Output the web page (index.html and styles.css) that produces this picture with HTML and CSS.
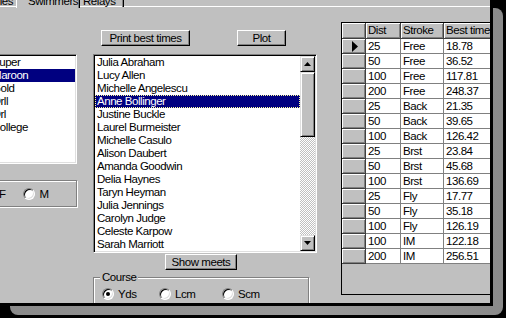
FILE: index.html
```html
<!DOCTYPE html>
<html>
<head>
<meta charset="utf-8">
<link rel="stylesheet" href="styles.css">
</head>
<body>
<div class="monitor">
  <div class="screen">
    <div class="tabs">
      <div class="tab tab-first">Schedules</div>
      <div class="tab tab-active">Swimmers</div>
      <div class="tab tab-relays">Relays</div>
    </div>
    <div class="content">
      <div class="col-left">
        <div class="listbox lb-teams">
          <div class="item">Super</div>
          <div class="item sel">Maroon</div>
          <div class="item">Gold</div>
          <div class="item">Orll</div>
          <div class="item">Orl</div>
          <div class="item">College</div>
        </div>
        <div class="group gender">
          <div class="opt opt-f"><span class="radio"></span><span>F</span></div>
          <div class="opt"><span class="radio"></span><span>M</span></div>
        </div>
      </div>

      <div class="col-mid">
        <div class="btnrow">
          <div class="btn btn-print">Print best times</div>
          <div class="btn btn-plot">Plot</div>
        </div>
        <div class="listbox lb-swim">
          <div class="items">
            <div class="item">Julia Abraham</div>
            <div class="item">Lucy Allen</div>
            <div class="item">Michelle Angelescu</div>
            <div class="item sel focus">Anne Bollinger</div>
            <div class="item">Justine Buckle</div>
            <div class="item">Laurel Burmeister</div>
            <div class="item">Michelle Casulo</div>
            <div class="item">Alison Daubert</div>
            <div class="item">Amanda Goodwin</div>
            <div class="item">Delia Haynes</div>
            <div class="item">Taryn Heyman</div>
            <div class="item">Julia Jennings</div>
            <div class="item">Carolyn Judge</div>
            <div class="item">Celeste Karpow</div>
            <div class="item">Sarah Marriott</div>
          </div>
          <div class="vscroll">
            <div class="sbtn"><svg width="7" height="4" viewBox="0 0 7 4"><path d="M3.5 0 L7 4 L0 4 Z" fill="#000"/></svg></div>
            <div class="thumb"></div>
            <div class="track"></div>
            <div class="sbtn"><svg width="7" height="4" viewBox="0 0 7 4"><path d="M0 0 L7 0 L3.5 4 Z" fill="#000"/></svg></div>
          </div>
        </div>
        <div class="btn btn-meets">Show meets</div>
        <fieldset class="course">
          <legend>Course</legend>
          <div class="opts">
            <div class="opt opt-yds"><span class="radio checked"></span><span>Yds</span></div>
            <div class="opt opt-lcm"><span class="radio"></span><span>Lcm</span></div>
            <div class="opt"><span class="radio"></span><span>Scm</span></div>
          </div>
        </fieldset>
      </div>

      <div class="col-right">
        <div class="grid">
          <div class="row head">
            <div class="c fix"></div><div class="c fix">Dist</div><div class="c fix">Stroke</div><div class="c fix">Best time</div>
          </div>
          <div class="row"><div class="c fix ind"><svg width="6" height="11" viewBox="0 0 6 11"><path d="M0 0 L6 5.5 L0 11 Z" fill="#000"/></svg></div><div class="c">25</div><div class="c">Free</div><div class="c">18.78</div></div>
          <div class="row"><div class="c fix"></div><div class="c">50</div><div class="c">Free</div><div class="c">36.52</div></div>
          <div class="row"><div class="c fix"></div><div class="c">100</div><div class="c">Free</div><div class="c">117.81</div></div>
          <div class="row"><div class="c fix"></div><div class="c">200</div><div class="c">Free</div><div class="c">248.37</div></div>
          <div class="row"><div class="c fix"></div><div class="c">25</div><div class="c">Back</div><div class="c">21.35</div></div>
          <div class="row"><div class="c fix"></div><div class="c">50</div><div class="c">Back</div><div class="c">39.65</div></div>
          <div class="row"><div class="c fix"></div><div class="c">100</div><div class="c">Back</div><div class="c">126.42</div></div>
          <div class="row"><div class="c fix"></div><div class="c">25</div><div class="c">Brst</div><div class="c">23.84</div></div>
          <div class="row"><div class="c fix"></div><div class="c">50</div><div class="c">Brst</div><div class="c">45.68</div></div>
          <div class="row"><div class="c fix"></div><div class="c">100</div><div class="c">Brst</div><div class="c">136.69</div></div>
          <div class="row"><div class="c fix"></div><div class="c">25</div><div class="c">Fly</div><div class="c">17.77</div></div>
          <div class="row"><div class="c fix"></div><div class="c">50</div><div class="c">Fly</div><div class="c">35.18</div></div>
          <div class="row"><div class="c fix"></div><div class="c">100</div><div class="c">Fly</div><div class="c">126.19</div></div>
          <div class="row"><div class="c fix"></div><div class="c">100</div><div class="c">IM</div><div class="c">122.18</div></div>
          <div class="row"><div class="c fix"></div><div class="c">200</div><div class="c">IM</div><div class="c">256.51</div></div>
        </div>
      </div>
    </div>
  </div>
</div>
</body>
</html>
```

FILE: styles.css
```css
* { box-sizing: border-box; }
html, body { margin: 0; padding: 0; background: #000; }
body {
  width: 506px; height: 318px; overflow: hidden;
  font-family: "Liberation Sans", Arial, sans-serif;
  font-size: 11.5px; letter-spacing: -0.45px; color: #000;
}
.monitor { position: relative; width: 506px; height: 318px; }
.monitor::before {
  content: ""; position: absolute; left: 10px; top: 8px; width: 493px; height: 307px;
  border-radius: 8px; background: linear-gradient(90deg, #8a8a8a, #9a9a9a 60%, #8a8a8a);
}
.screen {
  position: relative; width: 490px; height: 303px; overflow: hidden;
  background: #c0c0c0; box-shadow: 0 0 0 3px #000;
}

/* tabs */
.tabs { display: flex; margin-top: -5px; height: 12px; border-bottom: 1px solid #fff; line-height: 12px; }
.tab { height: 12px; white-space: nowrap; }
.tab-first { width: 60px; margin-left: -44px; text-align: right; padding-right: 3px; flex: none; }
.tab-active {
  width: 64px; height: 13px; padding-left: 11px; background: #c0c0c0; flex: none;
  border-left: 1px solid #fff; border-right: 1px solid #000; box-shadow: inset -1px 0 #808080;
}
.tab-relays { width: 44px; padding-left: 3px; flex: none; border-right: 1px solid #000; box-shadow: inset -1px 0 #808080; }

.content { display: flex; align-items: flex-start; }

/* listboxes */
.listbox {
  background: #fff; border: 1px solid; border-color: #808080 #fff #fff #808080;
  box-shadow: inset 1px 1px #000, inset -1px -1px #dfdfdf; padding: 1px;
}
.item { height: 13px; line-height: 13px; padding-left: 2px; white-space: nowrap; }
.item.sel { background: #000080; color: #fff; }
.item.focus { outline: 1px dotted #ffff9c; outline-offset: -1px; }

/* left column */
.col-left { margin-left: -30px; margin-top: 47px; width: 107px; flex: none; }
.lb-teams { margin-left: 18px; width: 89px; height: 110px; overflow: hidden; }
.group {
  border: 1px solid #808080; box-shadow: inset 1px 1px #fff, 1px 1px #fff;
}
.gender { margin-top: 16px; height: 27px; display: flex; align-items: center; padding-left: 11px; }
.opt { display: flex; align-items: center; gap: 5px; white-space: nowrap; }
.opt-f { margin-right: 17px; }

.radio {
  position: relative; width: 12px; height: 12px; border-radius: 50%; flex: none;
  background: #fff; border: 1px solid; border-color: #808080 #fff #fff #808080;
  box-shadow: inset 1px 1px #000, inset -1px -1px #dfdfdf;
}
.radio.checked::after {
  content: ""; position: absolute; left: 3px; top: 3px; width: 4px; height: 4px;
  border-radius: 50%; background: #000;
}

/* middle column */
.col-mid { margin-left: 16px; margin-top: 23px; width: 224px; flex: none; }
.btnrow { display: flex; height: 16px; }
.btn {
  height: 16px; display: flex; align-items: center; justify-content: center; line-height: 12px;
  background: #c0c0c0; border: 1px solid; border-color: #fff #000 #000 #fff;
  box-shadow: inset -1px -1px #808080; white-space: nowrap; flex: none;
}
.btn-print { margin-left: 8px; width: 89px; }
.btn-plot { margin-left: 47px; width: 49px; }
.lb-swim { margin-top: 8px; height: 199px; display: flex; }
.items { flex: 1; }
.vscroll { width: 15px; flex: none; display: flex; flex-direction: column; }
.sbtn, .thumb {
  background: #c0c0c0; border: 1px solid; border-color: #dfdfdf #000 #000 #dfdfdf;
  box-shadow: inset 1px 1px #fff, inset -1px -1px #808080;
}
.sbtn { height: 16px; display: flex; align-items: center; justify-content: center; }
.sbtn svg { display: block; }
.thumb { height: 65px; }
.track { flex: 1; background: repeating-conic-gradient(#fff 0 25%, #c0c0c0 0 50%) 0 0 / 2px 2px; }
.btn-meets { margin-top: 1px; margin-left: 72px; width: 72px; }

.course {
  margin: 1px 0 0; padding: 0 6px; min-width: 0; width: 216px; height: 60px;
  border: 1px solid #808080; box-shadow: inset 1px 1px #fff, 1px 1px #fff;
}
.course legend { padding: 0 2px; line-height: 12px; background: #c0c0c0; }
.opts { display: flex; margin-top: 4px; height: 14px; align-items: center; padding-left: 2px; }
.opts .opt { gap: 4px; }
.opt-yds { width: 57px; }
.opt-lcm { width: 63px; }

/* right column grid */
.col-right { margin-left: 24px; margin-top: 15px; width: 170px; flex: none; }
.grid {
  height: 273px; background: #c0c0c0;
  border-left: 1px solid #000; border-top: 1px solid #000; border-bottom: 1px solid #000;
}
.row { display: grid; grid-template-columns: 24px 35px 43px 66px; height: 15px; }
.row.head { height: 16px; }
.c {
  background: #fff; border-right: 1px solid #808080; border-bottom: 1px solid #808080;
  padding-left: 2px; line-height: 12px; padding-top: 1px; white-space: nowrap;
}
.head .c { line-height: 15px; padding-top: 0; }
.c.fix { background: #c0c0c0; border-color: #404040; box-shadow: inset 1px 1px #fff, inset -1px -1px #808080; }
.ind { display: flex; align-items: center; justify-content: center; }
.ind svg { display: block; }
```
